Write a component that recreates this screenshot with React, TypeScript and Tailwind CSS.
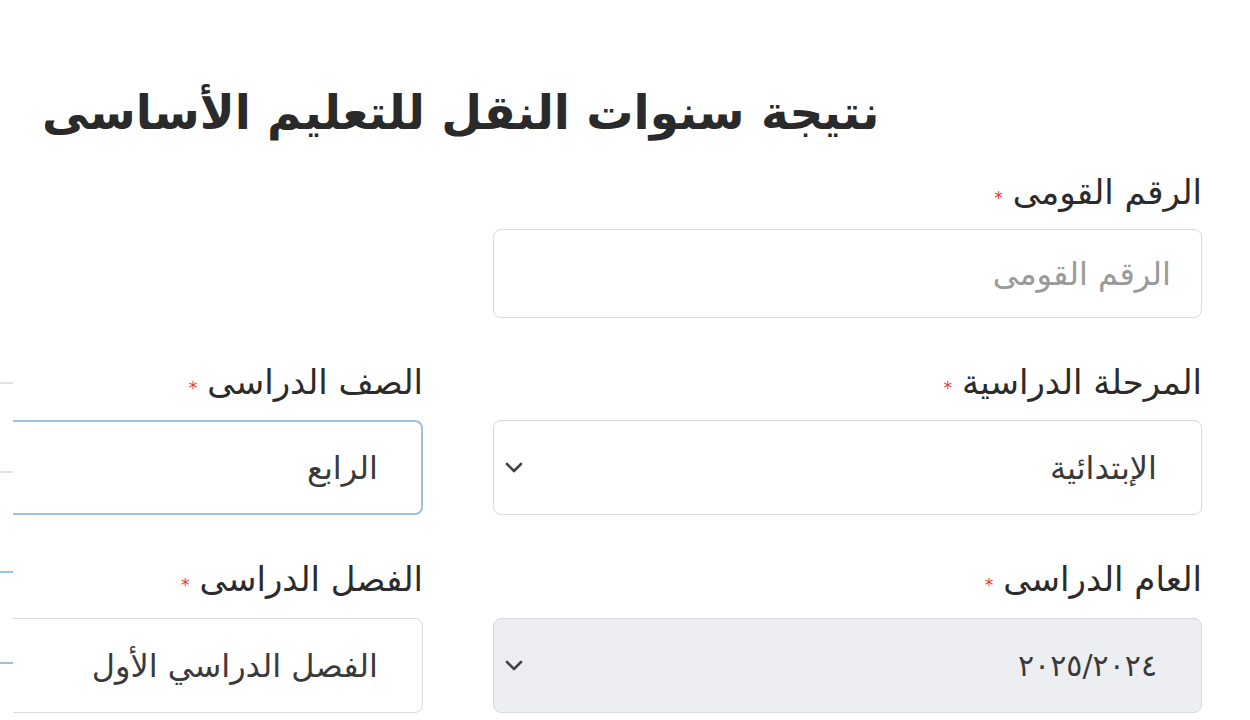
import React from "react";

const FONT = { fontFamily: '"DejaVu Sans", "Noto Sans Arabic", sans-serif' };

function Label({ text }: { text: string }) {
  return (
    <div dir="rtl" className="h-[44px] flex items-center gap-[10px] text-[34px] leading-[44px] text-[#2b2b2b]">
      <span>{text}</span>
      <span className="text-[#e53935] text-[17px] leading-none mt-[12px]">*</span>
    </div>
  );
}

function Chevron() {
  return (
    <svg width="18" height="12" viewBox="0 0 18 12" className="shrink-0">
      <path d="M2 2 L9 9 L16 2" fill="none" stroke="#444" strokeWidth="2.6" strokeLinecap="round" strokeLinejoin="round" />
    </svg>
  );
}

export default function App() {
  return (
    <div className="w-[1250px] h-[720px] bg-white overflow-hidden" style={FONT}>
      <div className="pt-[78px] pl-[42px] h-[170px]">
        <h1 dir="rtl" className="w-fit text-[47px] font-bold leading-[70px] text-[#2a2a2a]">
          نتيجة سنوات النقل للتعليم الأساسى
        </h1>
      </div>
      <div className="flex">
        <div className="w-[13px] shrink-0 flex flex-col">
          <div className="mt-[212px] h-[91px] border-y-2 border-[#e2e2e2]" />
          <div className="mt-[98px] h-[93px] border-y-2 border-[#9cc0de]" />
        </div>
        <div className="grid grid-cols-[410px_709px] gap-x-[70px]">
          <div />
          <div className="flex flex-col">
            <Label text="الرقم القومى" />
            <div dir="rtl" className="mt-[15px] h-[89px] rounded-[8px] border border-[#d9d9d9] flex items-center pr-[30px] text-[32px] text-[#9a9a9a]">
              الرقم القومى
            </div>
          </div>
          <div className="flex flex-col mt-[42px]">
            <Label text="الصف الدراسى" />
            <div className="mt-[16px] overflow-hidden">
              <div dir="rtl" className="-ml-[30px] h-[95px] rounded-[8px] border-2 border-[#9cc0de] flex items-center pr-[43px] text-[32px] text-[#3a3a3a]">
                الرابع
              </div>
            </div>
          </div>
          <div className="flex flex-col mt-[42px]">
            <Label text="المرحلة الدراسية" />
            <div dir="rtl" className="mt-[16px] h-[95px] rounded-[8px] border border-[#d9d9d9] flex items-center justify-between pr-[44px] pl-[11px] text-[32px] text-[#3a3a3a]">
              <span>الإبتدائية</span>
              <Chevron />
            </div>
          </div>
          <div className="flex flex-col mt-[42px]">
            <Label text="الفصل الدراسى" />
            <div className="mt-[17px] overflow-hidden">
              <div dir="rtl" className="-ml-[30px] h-[95px] rounded-[8px] border border-[#d9d9d9] flex items-center pr-[44px] text-[32px] text-[#3a3a3a]">
                الفصل الدراسي الأول
              </div>
            </div>
          </div>
          <div className="flex flex-col mt-[42px]">
            <Label text="العام الدراسى" />
            <div dir="rtl" className="mt-[17px] h-[95px] rounded-[8px] border border-[#d9d9d9] bg-[#eceef1] flex items-center justify-between pr-[44px] pl-[11px] text-[30px] text-[#3a3a3a]">
              <span dir="ltr">٢٠٢٥/٢٠٢٤</span>
              <Chevron />
            </div>
          </div>
        </div>
      </div>
    </div>
  );
}
